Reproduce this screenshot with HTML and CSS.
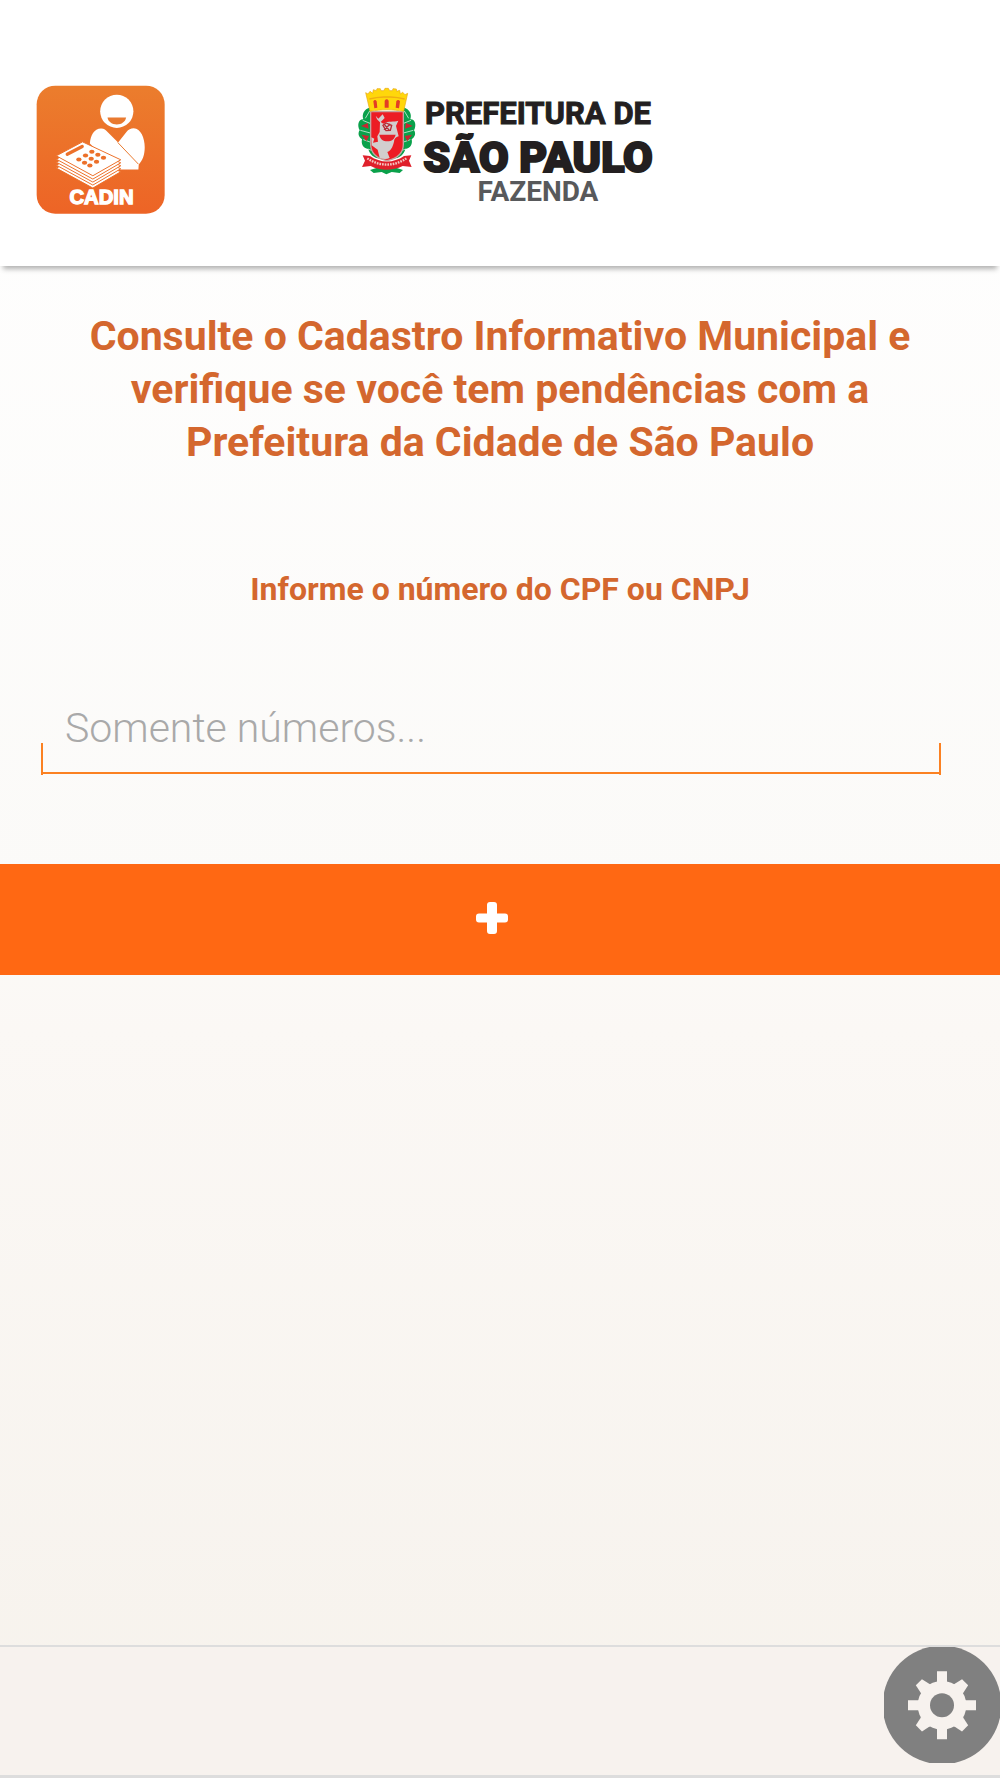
FILE: index.html
```html
<!DOCTYPE html>
<html lang="pt-BR">
<head>
    <meta charset="UTF-8">
    <meta name="viewport" content="width=device-width, initial-scale=1.0">
    <title>CADIN - Prefeitura de São Paulo</title>
    <link rel="stylesheet" href="styles.css">
</head>
<body>
    <header>
        <svg class="cadin" viewBox="48 46 388 388" role="img" aria-label="CADIN">
            <defs>
                <linearGradient id="orange" x1="0" y1="0" x2="0" y2="1">
                    <stop offset="0" stop-color="#eb7d2d"/>
                    <stop offset="1" stop-color="#ed6426"/>
                </linearGradient>
            </defs>
            <rect x="50" y="48" width="385" height="385" rx="56" fill="url(#orange)"/>
            <!-- person -->
            <circle cx="291" cy="125" r="50" fill="#fff"/>
            <path d="M263 144h56c-2 13-14 21-28 21s-26-8-28-21z" fill="#e97a30"/>
            <path d="M210 222c2-24 12-45 34-45 9 0 14 5 20 11l31 31 25-32c6-7 13-11 22-11 21 0 33 30 33 57 0 24-7 40-18 52l-1 15H290z" fill="#fff"/>
            <path d="M294 219l62 65" stroke="#e97a30" stroke-width="3" fill="none"/>
            <!-- stack of papers -->
            <g fill="#fff" stroke="#ec702a" stroke-width="3" stroke-linejoin="round">
                <path d="M109 296l81-41 113 52-84 49z"/>
                <path d="M109 287l81-41 113 52-84 49z"/>
                <path d="M109 278l81-41 113 52-84 49z"/>
                <path d="M109 269l81-41 113 52-84 49z"/>
                <path d="M109 259l79-42 115 54-84 48z"/>
            </g>
            <path d="M142 254l45-23" stroke="#ec702a" stroke-width="10" stroke-linecap="round"/>
            <g fill="#ec702a">
                <ellipse cx="177" cy="270" rx="8" ry="6"/>
                <ellipse cx="197" cy="258" rx="8" ry="6"/>
                <ellipse cx="216" cy="247" rx="8" ry="6"/>
                <ellipse cx="194" cy="280" rx="8" ry="6"/>
                <ellipse cx="214" cy="268" rx="8" ry="6"/>
                <ellipse cx="234" cy="256" rx="8" ry="6"/>
                <ellipse cx="210" cy="288" rx="8" ry="6"/>
                <ellipse cx="230" cy="277" rx="8" ry="6"/>
                <ellipse cx="251" cy="265" rx="8" ry="6"/>
            </g>
            <text class="cadin-name" x="245" y="404" text-anchor="middle">CADIN</text>
        </svg>

        <div class="prefeitura">
            <svg class="crest" viewBox="36 36 180 264" role="img" aria-label="Brasão de São Paulo">
                <!-- branches -->
                <g fill="#0aa14b">
                    <path d="M76 97c-20 6-26 22-21 36-15-1-19 19-11 33-6 8-4 20 7 27-3 14 2 26 19 29 4 17 17 27 35 29L82 180z"/>
                    <path d="M175 97c20 6 26 22 21 36 15-1 19 19 11 33 6 8 4 20-7 27 3 14-2 26-19 29-4 17-17 27-35 29l23-71z"/>
                    <path d="M104 276l20-8 22 8 28 9-10 9-24-3-16 7-14-7-24 3-11-9z"/>
                </g>
                <g stroke="#fff" stroke-width="2" fill="none">
                    <path d="M74 108l-13 22M75 145l-22-9M76 174l-30-8M78 202l-23-8M85 228l-16-6"/>
                    <path d="M178 108l13 22M176 145l22-9M175 174l30-8M173 202l23-8M166 228l16-6"/>
                </g>
                <g fill="#c92632">
                    <path d="M48 153l20-9 3 17zM50 179l22 4-8 16zM203 153l-20-9-3 17zM201 179l-22 4 8 16z"/>
                </g>
                <!-- shield -->
                <path d="M77 110h98v98c0 27-19 43-49 49-30-6-49-22-49-49z" fill="#ec1c24" stroke="#c3a3a0" stroke-width="4"/>
                <path d="M92 122l8 9 13-13 6 11-12 12 8 5c16-11 30-3 45-9l-7 16 8 31c-9 2-14 8-14 16-4 17-10 27-20 31l7 18c-9 4-20 4-30-1l-6-24-18-13-1-24 9 4-4 12 15-3-2-16 7-13 1-29-9-9z" fill="#d2cece"/>
                <path d="M103 179h49c-3 13-12 20-25 20s-22-7-24-20z" fill="#e5202a"/>
                <path d="M114 151l9-7 17 7-4 15-13 1zM117 164l19-17M118 148l15 18" fill="none" stroke="#b72b34" stroke-width="4"/>
                <!-- crown -->
                <path d="M62 53l7 4 6-8 8 6 2-11 9 3 2-6h10l2 6h8l4-7h10l4 7h8l2-6 10 1 1 7 9-3 2 11 7-5 7 7 8-4-12 54c-34-6-66-6-101 0z" fill="#ffd70b" stroke="#e9a815" stroke-width="2"/>
                <path d="M73 72l21-4 22-2h21l21 2 21 4" fill="none" stroke="#f0ad13" stroke-width="4"/>
                <g fill="#e33d25">
                    <path d="M85 79q5-8 10 0l2 19-9 2zM119 77q6-8 12 0v21h-12zM154 78q6-7 11 1l-3 21-10-2z"/>
                </g>
                <!-- ribbon -->
                <path d="M51 276l9-19-7-16 22 2c31 22 71 22 102 0l22-2-7 16 8 19-27-3c-30 15-67 15-96 0z" fill="#df202b"/>
                <path d="M67 250c35 25 82 25 117 0" fill="none" stroke="#f5c4c0" stroke-width="7" stroke-dasharray="5 3"/>
            </svg>
            <div class="prefeitura-text">
                <span class="line-top">PREFEITURA DE</span>
                <span class="line-city">SÃO PAULO</span>
                <span class="line-dept">FAZENDA</span>
            </div>
        </div>
    </header>

    <main>
        <h1>Consulte o Cadastro Informativo Municipal e verifique se você tem pendências com a Prefeitura da Cidade de São Paulo</h1>
        <form>
            <label for="documento">Informe o número do CPF ou CNPJ</label>
            <div class="field">
                <input type="text" id="documento" inputmode="numeric" placeholder="Somente números...">
            </div>
            <button type="button" class="btn-add" aria-label="Adicionar">
                <svg viewBox="0 0 32 32">
                    <path d="M14 0h4q3 0 3 3v8.500h8q3 0 3 3v3q0 3-3 3h-8V29q0 3-3 3h-4q-3 0-3-3v-8.500H3q-3 0-3-3v-3q0-3 3-3h8V3q0-3 3-3z" fill="#fff"/>
                </svg>
            </button>
        </form>
    </main>

    <footer>
        <button type="button" class="btn-config" aria-label="Configurações">
            <svg viewBox="72 51 348 348">
                <circle cx="246" cy="225" r="178" fill="#808080"/>
                <g fill="#f7f2ee">
                    <circle cx="246" cy="226" r="73"/>
                    <path d="M231 124h30v204h-30zM144 211h204v30H144z"/>
                    <path d="M233 128h26l6 28v140l-6 28h-26l-6-28V156z" transform="rotate(45 246 226)"/>
                    <path d="M233 128h26l6 28v140l-6 28h-26l-6-28V156z" transform="rotate(-45 246 226)"/>
                </g>
                <circle cx="246" cy="226" r="36" fill="#808080"/>
            </svg>
        </button>
    </footer>
</body>
</html>
```
FILE: styles.css
```css
* {
    margin: 0;
    padding: 0;
    box-sizing: border-box;
    font-family: Roboto, sans-serif;
}

body {
    background: linear-gradient(180deg, #ffffff, #fbfaf8 50%, #fbf8f5 58%, #f6f2ec);
    min-height: 100vh;
    display: flex;
    flex-direction: column;
}

header {
    background: #fff;
    display: grid;
    grid-template-columns: 1fr auto 1fr;
    align-items: start;
    padding: 85px 26px 52px 36px;
    box-shadow: 0 6px 5px -3px rgba(0, 0, 0, 0.3);
}

.cadin {
    display: block;
    width: 129px;
    height: 129px;
}

.cadin-name {
    font-family: "Liberation Sans", Arial, sans-serif;
    font-size: 61px;
    font-weight: 700;
    fill: #fff;
    stroke: #fff;
    stroke-width: 4px;
}

.prefeitura {
    display: flex;
    gap: 6px;
}

.crest {
    width: 60px;
    height: 88px;
    margin-top: 2px;
}

.prefeitura-text {
    display: flex;
    flex-direction: column;
    align-items: center;
    width: 230px;
    padding-top: 11px;
    color: #231f20;
    font-weight: 700;
    white-space: nowrap;
}

.line-top {
    font-size: 31px;
    line-height: 36px;
    -webkit-text-stroke: 1px #231f20;
}

.line-city {
    font-weight: 900;
    font-size: 43px;
    line-height: 50px;
    -webkit-text-stroke: 2px #231f20;
}

.line-dept {
    font-size: 28px;
    line-height: 20px;
    color: #58595b;
}

main {
    flex: 1;
    padding-top: 44px;
    text-align: center;
}

h1 {
    padding: 0 60px;
    font-size: 41px;
    font-weight: 700;
    line-height: 53px;
    color: #d4672e;
}

label {
    display: block;
    margin-top: 100px;
    font-size: 32px;
    font-weight: 700;
    line-height: 40px;
    color: #d4672e;
}

.field {
    margin: 80px 59px 0 41px;
    padding-bottom: 8px;
    /* the side borders only rise 32px from the bottom line */
    background:
        linear-gradient(#fb8122, #fb8122) left bottom / 2px 32px no-repeat,
        linear-gradient(#fb8122, #fb8122) right bottom / 2px 32px no-repeat,
        linear-gradient(#fb8122, #fb8122) left bottom 1px / 100% 2px no-repeat;
}

input {
    display: block;
    width: 100%;
    height: 78px;
    padding: 0 24px;
    border: none;
    outline: none;
    background: transparent;
    font-size: 41px;
    font-weight: 300;
    color: #555;
}

input::placeholder {
    color: #a9a9a9;
    opacity: 1;
}

.btn-add {
    display: flex;
    align-items: center;
    justify-content: center;
    width: 100%;
    height: 111px;
    margin-top: 89px;
    padding: 0 16px 4px 0;
    border: none;
    background: #ff6813;
    cursor: pointer;
}

.btn-add svg {
    width: 32px;
    height: 32px;
}

footer {
    display: flex;
    justify-content: flex-end;
    align-items: flex-start;
    height: 133px;
    background: #f7f2ee;
    border-top: 2px solid #dddddd;
    border-bottom: 3px solid #dddddd;
}

.btn-config {
    border: none;
    background: none;
    cursor: pointer;
}

.btn-config svg {
    display: block;
    width: 116px;
    height: 116px;
}
```
